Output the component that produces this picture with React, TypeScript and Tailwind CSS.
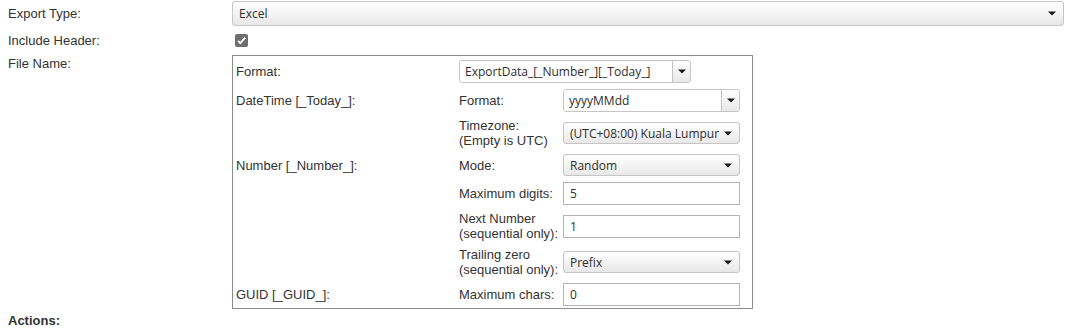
import React from 'react'

const Arrow = () => (
    <svg width="8" height="5" viewBox="0 0 8 5" className="shrink-0">
        <path d="M0 0.5h8L4 4.5z" fill="#1a1a1a" />
    </svg>
)

const DropDown = ({ value, className = '' }: { value: string; className?: string }) => (
    <div className={`flex items-center h-[22px] border border-[#c5c5c5] rounded-[3px] bg-linear-to-b from-white to-[#e8e8e8] pl-[6px] pr-[7px] ${className}`}>
        <span className="flex-1 mr-[5px] overflow-hidden whitespace-nowrap font-['Open_Sans',sans-serif] text-[12px] text-[#2e2e2e]">{value}</span>
        <Arrow />
    </div>
)

const ComboBox = ({ value, className = '' }: { value: string; className?: string }) => (
    <div className={`flex h-[23px] border border-[#c5c5c5] rounded-[3px] overflow-hidden ${className}`}>
        <div className="flex-1 flex items-center bg-white pl-[5px] font-['Open_Sans',sans-serif] text-[12px] text-[#2e2e2e] whitespace-nowrap overflow-hidden">
            {value}
        </div>
        <div className="w-[18px] flex items-center justify-center border-l border-[#c5c5c5] bg-linear-to-b from-white to-[#e8e8e8]">
            <Arrow />
        </div>
    </div>
)

const TextBox = ({ value }: { value: string }) => (
    <div className="flex items-center h-[23px] border border-[#b4b4b4] bg-white px-[6px] font-['Open_Sans',sans-serif] text-[12px] text-[#2e2e2e]">
        {value}
    </div>
)

const App = () => {
    return (
        <div className="w-[1077px] h-[330px] bg-white font-['Liberation_Sans',Arial,sans-serif] text-[13px] leading-[15px] text-[#333]">
            <div className="grid grid-cols-[224px_1fr] pl-2 pr-[13px] pt-px">
                <div className="h-[25px] flex items-center">Export Type:</div>
                <DropDown value="Excel" className="h-[25px]" />

                <div className="h-[26px] mt-px flex items-center">Include Header:</div>
                <div className="h-[26px] mt-px flex items-center pl-[3px]">
                    <svg width="13" height="13" viewBox="0 0 13 13">
                        <rect x="0" y="0" width="13" height="13" rx="2" fill="#6e6e6e" />
                        <path d="M3 6.8l2.3 2.3L10.2 3.6" stroke="#fff" strokeWidth="1.9" fill="none" />
                    </svg>
                </div>

                <div className="mt-[2px] pt-px">File Name:</div>
                <div className="mt-[2px]">
                    <div className="w-[521px] border border-[#8c8c8c] pt-[4px] pb-[2px]">
                        <div className="grid grid-cols-[226px_104px_177px] gap-y-[6px] items-center">
                            <div className="pl-[3px]">Format:</div>
                            <ComboBox value="ExportData_[_Number_][_Today_]" className="col-span-2 w-[232px]" />

                            <div className="pl-[3px]">DateTime [_Today_]:</div>
                            <div>Format:</div>
                            <ComboBox value="yyyyMMdd" />

                            <div />
                            <div>Timezone:<br />(Empty is UTC)</div>
                            <DropDown value="(UTC+08:00) Kuala Lumpur" />

                            <div className="pl-[3px]">Number [_Number_]:</div>
                            <div>Mode:</div>
                            <DropDown value="Random" />

                            <div />
                            <div>Maximum digits:</div>
                            <TextBox value="5" />

                            <div />
                            <div>Next Number<br />(sequential only):</div>
                            <TextBox value="1" />

                            <div />
                            <div>Trailing zero<br />(sequential only):</div>
                            <DropDown value="Prefix" />

                            <div className="pl-[3px]">GUID [_GUID_]:</div>
                            <div>Maximum chars:</div>
                            <TextBox value="0" />
                        </div>
                    </div>
                </div>
            </div>
            <div className="pl-2 mt-[4px] font-bold">Actions:</div>
        </div>
    )
}

export default App
